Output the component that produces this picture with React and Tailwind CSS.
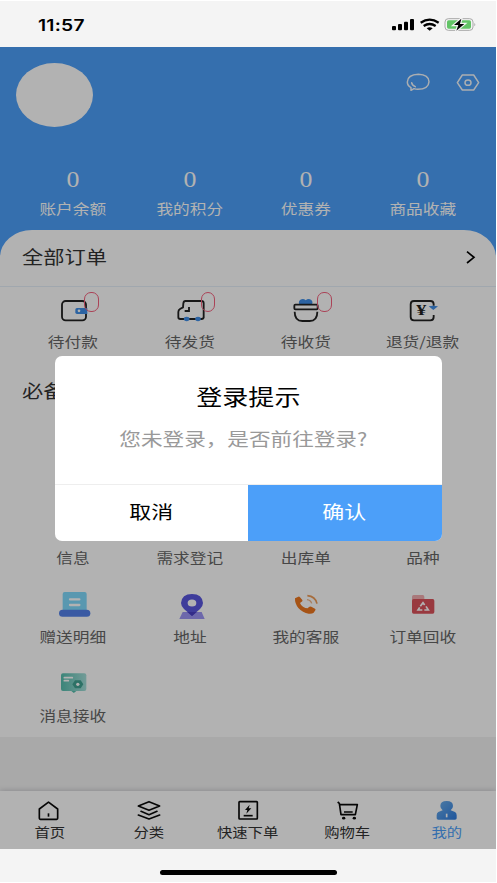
import React from 'react';

// Glyphs are set slightly wide across the whole screen
const Wide = ({ className = '', children }) => (
  <span className={`inline-block whitespace-nowrap scale-x-[1.2] ${className}`}>{children}</span>
);

const Svg = ({ w, h, children }) => (
  <svg width={w / 3} height={h / 3} viewBox={`0 0 ${w} ${h}`} fill="none" className="block overflow-visible">
    {children}
  </svg>
);

const WalletIcon = () => (
  <Svg w={132} h={102}>
    <rect x="33" y="33" width="72" height="58" rx="11" stroke="#222" strokeWidth="5.5" />
    <path d="M78 54h31v18H78a5 5 0 0 1-5-5v-8a5 5 0 0 1 5-5z" fill="#3f8fe8" />
    <circle cx="84" cy="62.500" r="4" fill="#fff" />
  </Svg>
);

const TruckIcon = () => (
  <Svg w={132} h={102}>
    <path d="M107 84V40q0-7-7-7H52q-5 0-6 7l-1 12-9 5q-5 3-5 9v16q0 5 6 5h63q7 0 7-6" stroke="#222" strokeWidth="5.5" />
    <path d="M63 51v12H50" stroke="#222" strokeWidth="5.5" />
    <ellipse cx="56" cy="87" rx="8.500" ry="6.500" fill="#3f8fe8" />
    <ellipse cx="90" cy="87" rx="8.500" ry="6.500" fill="#3f8fe8" />
  </Svg>
);

const BasketIcon = () => (
  <Svg w={132} h={102}>
    <path d="M48 45q-7-8 0-15 10-6 17 1 8-7 17-1 7 7 0 15z" fill="#3f8fe8" />
    <rect x="31" y="44" width="70" height="14" rx="3" stroke="#222" strokeWidth="5.500" />
    <path d="M32 65q0 28 23 28h22q23 0 23-28" stroke="#222" strokeWidth="5.500" />
  </Svg>
);

const RefundIcon = () => (
  <Svg w={132} h={102}>
    <path d="M98 47v-4q0-10-10-10H39q-10 0-10 10v38q0 10 10 10h49q10 0 10-10v-6" stroke="#222" strokeWidth="5.500" />
    <path d="M83 49q12-4 28 0L97 60z" fill="#3f8fe8" />
    <text x="61" y="76" textAnchor="middle" fontSize="42" fontWeight="700" fontFamily="Liberation Serif, serif" fill="#222" textLength="30" lengthAdjust="spacingAndGlyphs">¥</text>
  </Svg>
);

const PrinterIcon = () => (
  <Svg w={132} h={108}>
    <rect x="35" y="12" width="72" height="66" rx="6" fill="#80dafd" />
    <path d="M57 34h28M57 51h28" stroke="#fff" strokeWidth="7" strokeLinecap="round" />
    <rect x="24" y="65" width="94" height="21" rx="10.500" fill="#5382ea" />
  </Svg>
);

const PinIcon = () => (
  <Svg w={132} h={108}>
    <path d="M44 72h57l9 21H34z" fill="#9d96f5" />
    <path d="M72 84L48 63Q39 54 39 45 41 18 72 18t33 27q0 9-9 18z" fill="#5a57df" />
    <ellipse cx="72" cy="45" rx="13" ry="10.500" fill="#fff" />
    <path d="M58 72h28l-14 12z" fill="#4a3fc4" />
  </Svg>
);

const PhoneIcon = () => (
  <Svg w={132} h={108}>
    <path d="M33 31l10-5q3-1 5 2l7 8q2 3-2 5l-5 4q2 6 9 11t14 5l4-4q3-3 7-1l11 6q3 2 1 5l-5 7q-5 4-15 3-18-3-31-17Q32 46 33 31z" fill="#ee771f" />
    <path d="M70 23q24 2 29 24" stroke="#ee9c58" strokeWidth="5" />
    <path d="M69 35q11 1 14 11" stroke="#efb487" strokeWidth="4" />
  </Svg>
);

const FolderIcon = () => (
  <Svg w={132} h={108}>
    <path d="M33 40V26q0-5 5-5h27q5 0 5 5v14z" fill="#f2aeb1" />
    <rect x="33" y="33" width="67" height="44" rx="5" fill="#dc525b" />
    <path d="M58 55l8-11 5 7M75 55l7 11H70M64 66H51l5-8" stroke="#fff" strokeWidth="5" />
  </Svg>
);

const MessageIcon = () => (
  <Svg w={132} h={108}>
    <defs>
      <linearGradient id="msg" x1="0" x2="1">
        <stop offset="0" stopColor="#56bfae" />
        <stop offset="1" stopColor="#a5dfda" />
      </linearGradient>
    </defs>
    <rect x="30" y="19" width="76" height="53" rx="6" fill="url(#msg)" />
    <path d="M61 72h15l-7.500 6z" fill="#56bfae" />
    <path d="M40 32h24M40 41h12" stroke="#fff" strokeWidth="5" strokeLinecap="round" />
    <path d="M64 52l8-12h17l8 12-8 12H72z" fill="#41a392" />
    <circle cx="80.500" cy="52" r="5" fill="#fff" />
  </Svg>
);

const HomeIcon = () => (
  <Svg w={99} h={72}>
    <path d="M19 30L46.500 9.500 74 30v28q0 3-3 3H22q-3 0-3-3z" stroke="#0a0a0a" strokeWidth="5" strokeLinejoin="round" />
    <path d="M46.500 43v10" stroke="#0a0a0a" strokeWidth="5" />
  </Svg>
);

const LayersIcon = () => (
  <Svg w={99} h={72}>
    <g stroke="#0a0a0a" strokeWidth="4.8" strokeLinejoin="round" strokeLinecap="round">
      <path d="M51 8l32 13-32 13-32-13z" />
      <path d="M27 37l24 10 24-10M19 48l32 12 32-12" />
    </g>
  </Svg>
);

const QuickIcon = () => (
  <Svg w={99} h={72}>
    <rect x="24" y="8" width="55" height="52" rx="2" stroke="#0a0a0a" strokeWidth="5" />
    <path d="M38 50h27" stroke="#0a0a0a" strokeWidth="5" />
    <path d="M56 17L42 33h7l-3 11 15-16h-8z" fill="#0a0a0a" />
  </Svg>
);

const CartIcon = () => (
  <Svg w={99} h={72}>
    <path d="M20 9l5 4 5 34h43l6-30H27" stroke="#0a0a0a" strokeWidth="5" strokeLinejoin="round" />
    <path d="M39 39h26" stroke="#0a0a0a" strokeWidth="4.5" />
    <ellipse cx="38" cy="57.500" rx="5" ry="4" fill="#0a0a0a" />
    <ellipse cx="70" cy="57.500" rx="5" ry="4" fill="#0a0a0a" />
  </Svg>
);

const MineIcon = () => (
  <Svg w={99} h={72}>
    <defs>
      <linearGradient id="mine" x1="0" y1="0" x2="1" y2="1">
        <stop offset="0" stopColor="#6fb0ea" />
        <stop offset="1" stopColor="#2c7be0" />
      </linearGradient>
    </defs>
    <path d="M50 6q19 0 19 15 0 8-7 13l13 5q5 3 5 10v9q0 4-5 4H25q-5 0-5-4v-9q0-7 5-10l13-5q-7-5-7-13Q31 6 50 6z" fill="url(#mine)" />
    <path d="M50 44v11" stroke="#fff" strokeWidth="5" />
  </Svg>
);

const stats = ['账户余额', '我的积分', '优惠券', '商品收藏'];

const orders = [
  { label: '待付款', icon: WalletIcon, badge: true },
  { label: '待发货', icon: TruckIcon, badge: true },
  { label: '待收货', icon: BasketIcon, badge: true },
  { label: '退货/退款', icon: RefundIcon },
];

const tools = [
  { label: '信息' },
  { label: '需求登记' },
  { label: '出库单' },
  { label: '品种' },
  { label: '赠送明细', icon: PrinterIcon },
  { label: '地址', icon: PinIcon },
  { label: '我的客服', icon: PhoneIcon },
  { label: '订单回收', icon: FolderIcon },
  { label: '消息接收', icon: MessageIcon },
];

const tabs = [
  { label: '首页', icon: HomeIcon },
  { label: '分类', icon: LayersIcon },
  { label: '快速下单', icon: QuickIcon },
  { label: '购物车', icon: CartIcon },
  { label: '我的', icon: MineIcon, active: true },
];

const StatusBar = () => (
  <div className="flex h-[47px] shrink-0 items-center justify-between border-t border-white bg-[#f4f4f4] pl-[38px] pr-[19px]">
    <span className="mt-[2px] origin-left scale-x-[1.2] font-['Inter'] text-[16px] font-semibold leading-none tracking-[0.2px] text-black">11:57</span>
    <svg width="86" height="16" viewBox="0 0 258 48" fill="none" className="mt-[2px] block">
      <rect x="3" y="27" width="12" height="13" rx="3" fill="#000" />
      <rect x="21" y="21" width="12" height="19" rx="3" fill="#000" />
      <rect x="39" y="14" width="12" height="26" rx="3" fill="#000" />
      <rect x="57" y="6" width="12" height="34" rx="3" fill="#000" />
      <path d="M89 17q27-18 54 0M98 27q18-12 36 0" stroke="#000" strokeWidth="7" />
      <path d="M107 34q9-6 18 0l-9 7z" fill="#000" />
      <rect x="162" y="5" width="84" height="35" rx="10" stroke="#a9a9a9" strokeWidth="3" />
      <rect x="168" y="10" width="72" height="25" rx="5" fill="#62c466" />
      <path d="M250 18q6 5 0 10z" fill="#a9a9a9" />
      <path d="M211 5l-22 19h13l-6 17 24-20h-13z" fill="#000" stroke="#f4f4f4" strokeWidth="7" paintOrder="stroke" />
    </svg>
  </div>
);

const Header = () => (
  <div className="h-[210px] shrink-0 bg-[#4c9ff9] pt-4">
    <div className="flex h-16 items-start justify-between pl-4 pr-4">
      <div className="h-16 w-[77px] rounded-[50%] bg-white" />
      <div className="mt-[10px] flex gap-[26px]">
        <svg width="24" height="20" viewBox="0 0 72 60" fill="none" stroke="#fff" strokeWidth="4.500" strokeLinejoin="round" strokeLinecap="round" className="opacity-95">
          <path d="M15 52v-8Q4 38 4 27 5 5 37 4q31 1 32 22-1 22-34 23-6 0-11-2z" />
          <path d="M17 29q1 8 11 12" />
        </svg>
        <svg width="24" height="20" viewBox="0 0 72 60" fill="none" stroke="#fff" strokeWidth="4.500" strokeLinejoin="round" className="opacity-95">
          <path d="M19 6h34l15 23-15 22H19L4 29z" />
          <ellipse cx="36" cy="29" rx="9" ry="8" />
        </svg>
      </div>
    </div>
    <div className="mt-[40px] grid grid-cols-4 px-[15px] text-center">
      {stats.map((label) => (
        <div key={label} className="flex flex-col items-center text-white">
          <span className="inline-block scale-x-[1.1] font-['Liberation_Serif',serif] text-[23.5px] leading-[24px]">0</span>
          <Wide className="mt-[6.5px] text-[13.9px] leading-[20px]">{label}</Wide>
        </div>
      ))}
    </div>
  </div>
);

const Orders = () => (
  <>
    <div className="flex h-[57px] items-center justify-between border-b border-[#e6f0f9] pl-[22px] pr-[20px] pb-[3px]">
      <Wide className="origin-left text-[17.7px] leading-none text-[#333]">全部订单</Wide>
      <svg width="12" height="16" viewBox="0 0 36 48" fill="none" stroke="#000" strokeWidth="5">
        <path d="M9 8l21 17L9 42" />
      </svg>
    </div>
    <div className="grid grid-cols-4 px-[15px] pt-[3px]">
      {orders.map(({ label, icon: Icon, badge }) => (
        <div key={label} className="flex flex-col items-center">
          <div className="relative">
            <Icon />
            {badge && <span className="absolute left-[33px] top-[2px] h-[19.500px] w-[14.500px] rounded-[7px] border border-[#f5607d]" />}
          </div>
          <Wide className="mt-[7px] text-[13.9px] leading-[20px] text-[#666]">{label}</Wide>
        </div>
      ))}
    </div>
  </>
);

const Tools = () => (
  <>
    <div className="flex h-[79px] items-center pl-[22px]">
      <Wide className="origin-left text-[17.7px] leading-none text-[#333]">必备工具</Wide>
    </div>
    <div className="mt-[79px] grid grid-cols-4 px-[15px]">
      {tools.map(({ label, icon: Icon }) => (
        <div key={label} className="flex h-[79px] flex-col items-center">
          <div className="h-9 w-11">{Icon && <Icon />}</div>
          <Wide className="mt-[2px] text-[13.9px] leading-[20px] text-[#666]">{label}</Wide>
        </div>
      ))}
    </div>
  </>
);

const TabBar = () => (
  <div className="grid h-[58px] shrink-0 grid-cols-5 bg-white pt-2 shadow-[0_-1px_5px_rgba(0,0,40,0.16)]">
    {tabs.map(({ label, icon: Icon, active }) => (
      <div key={label} className="flex flex-col items-center">
        <Icon />
        <Wide className={`text-[12.8px] leading-[18px] ${active ? 'text-[#4c9ff9]' : 'text-[#333]'}`}>{label}</Wide>
      </div>
    ))}
  </div>
);

const LoginDialog = () => (
  <div className="absolute inset-0 flex flex-col items-center bg-black/30 pt-[309px]">
    <div className="flex h-[185px] w-[387px] flex-col overflow-hidden rounded-[7px] bg-white">
      <div className="flex h-[128px] flex-col items-center pt-[25px]">
        <Wide className="text-[21.700px] leading-[30px] text-black">登录提示</Wide>
        <Wide className="mr-[10px] mt-[14px] text-[18px] leading-[26px] text-[#999]">您未登录，是否前往登录?</Wide>
      </div>
      <div className="grid flex-1 grid-cols-2 border-t border-[#eee] text-[18.300px]">
        <button className="pb-[3px] text-black"><Wide>取消</Wide></button>
        <button className="bg-[#4c9ff9] pb-[3px] text-white"><Wide>确认</Wide></button>
      </div>
    </div>
  </div>
);

export default function App() {
  return (
    <div className="h-[883px] w-[497px] overflow-hidden bg-white pr-px font-['Noto_Sans_CJK_SC',sans-serif]">
      <StatusBar />
      <div className="relative flex h-[802px] flex-col overflow-hidden bg-[#f2f2f2]">
        <Header />
        <div className="-mt-[27px] h-[507px] shrink-0 bg-white [border-radius:32px_32px_0_0/27px_27px_0_0]">
          <Orders />
          <Tools />
        </div>
        <div className="flex-1" />
        <TabBar />
        <LoginDialog />
      </div>
      <div className="flex h-[33px] justify-center bg-[#f4f4f4] pt-[21px]">
        <div className="h-[5px] w-[177px] rounded-full bg-black" />
      </div>
    </div>
  );
}
